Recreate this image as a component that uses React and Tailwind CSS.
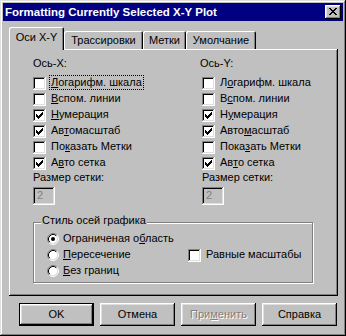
import React from "react";

// classic 3d bevels
const windowFrame = "shadow-[inset_-1px_-1px_#000,inset_1px_1px_#dfdfdf,inset_-2px_-2px_#808080,inset_2px_2px_#fff]";
const raised = "shadow-[inset_-1px_-1px_#000,inset_1px_1px_#fff,inset_-2px_-2px_#808080,inset_2px_2px_#dfdfdf]";
const sunken = "shadow-[inset_-1px_-1px_#fff,inset_1px_1px_#808080,inset_-2px_-2px_#dfdfdf,inset_2px_2px_#000]";

const leftItems = [
  { pre: "", u: "Л", post: "огарифм. шкала", checked: false, focus: true },
  { pre: "", u: "В", post: "спом. линии", checked: false },
  { pre: "", u: "Н", post: "умерация", checked: true },
  { pre: "Ав", u: "т", post: "омасштаб", checked: true },
  { pre: "По", u: "к", post: "азать Метки", checked: false },
  { pre: "А", u: "в", post: "то сетка", checked: true },
];

const rightItems = [
  { pre: "Л", u: "о", post: "гарифм. шкала", checked: false },
  { pre: "В", u: "с", post: "пом. линии", checked: false },
  { pre: "Н", u: "у", post: "мерация", checked: true },
  { pre: "Авто", u: "м", post: "асштаб", checked: true },
  { pre: "Пока", u: "з", post: "ать Метки", checked: false },
  { pre: "Ав", u: "т", post: "о сетка", checked: true },
];

const Label = ({ pre, u, post }) => (
  <>
    {pre}
    {u && <span className="underline underline-offset-[1px]">{u}</span>}
    {post}
  </>
);

const CheckMark = () => (
  <svg width="7" height="7" viewBox="0 0 7 7" shapeRendering="crispEdges">
    <rect x="6" y="0" width="1" height="1" />
    <rect x="5" y="1" width="2" height="1" />
    <rect x="0" y="2" width="1" height="1" />
    <rect x="4" y="2" width="3" height="1" />
    <rect x="0" y="3" width="2" height="1" />
    <rect x="3" y="3" width="3" height="1" />
    <rect x="0" y="4" width="5" height="1" />
    <rect x="1" y="5" width="3" height="1" />
    <rect x="2" y="6" width="1" height="1" />
  </svg>
);

const Box = ({ checked }) => (
  <span className={`flex w-[13px] h-[13px] shrink-0 items-center justify-center bg-white ${sunken}`}>
    {checked && <CheckMark />}
  </span>
);

const Radio = ({ on }) => (
  <svg width="12" height="12" viewBox="0 0 12 12" className="shrink-0">
    <circle cx="6" cy="6" r="4.5" fill="#fff" />
    <path d="M2.11 9.89 A5.5 5.5 0 0 1 9.89 2.11" fill="none" stroke="#808080" />
    <path d="M9.89 2.11 A5.5 5.5 0 0 1 2.11 9.89" fill="none" stroke="#fff" />
    <path d="M2.82 9.18 A4.5 4.5 0 0 1 9.18 2.82" fill="none" stroke="#000" />
    <path d="M9.18 2.82 A4.5 4.5 0 0 1 2.82 9.18" fill="none" stroke="#dfdfdf" />
    {on && <circle cx="6" cy="6" r="2" fill="#000" />}
  </svg>
);

const CheckRow = ({ item }) => (
  <div className="flex h-[16px] items-start">
    <Box checked={item.checked} />
    <span
      className={`ml-[4px] -mt-[1px] px-[1px] leading-[13px] whitespace-nowrap ${
        item.focus ? "outline outline-1 outline-dotted outline-black" : ""
      }`}
    >
      <Label {...item} />
    </span>
  </div>
);

const AxisColumn = ({ title, items, className }) => (
  <div className={className}>
    <div className="leading-[13px]">{title}</div>
    <div className="mt-[7px]">
      {items.map((it, i) => (
        <CheckRow key={i} item={it} />
      ))}
    </div>
    <div className="-mt-[2px] leading-[13px]">Размер сетки:</div>
    <div className={`mt-[3px] w-[22px] h-[18px] bg-[#c0c0c0] pl-[4px] pt-[2px] leading-[13px] text-[#808080] ${sunken}`}>
      2
    </div>
  </div>
);

const Button = ({ children, primary, disabled }) => (
  <div
    className={`flex w-[75px] h-[23px] items-center justify-center ${
      primary ? "border border-black" : ""
    }`}
  >
    <div className={`flex w-full h-full items-center justify-center ${raised}`}>
      <span className={disabled ? "text-[#808080] [text-shadow:1px_1px_0_#fff]" : ""}>{children}</span>
    </div>
  </div>
);

const CloseGlyph = () => (
  <svg width="8" height="7" viewBox="0 0 8 7" shapeRendering="crispEdges">
    <rect x="0" y="0" width="2" height="1" />
    <rect x="6" y="0" width="2" height="1" />
    <rect x="1" y="1" width="2" height="1" />
    <rect x="5" y="1" width="2" height="1" />
    <rect x="2" y="2" width="4" height="1" />
    <rect x="3" y="3" width="2" height="1" />
    <rect x="2" y="4" width="4" height="1" />
    <rect x="1" y="5" width="2" height="1" />
    <rect x="5" y="5" width="2" height="1" />
    <rect x="0" y="6" width="2" height="1" />
    <rect x="6" y="6" width="2" height="1" />
  </svg>
);

export default function App() {
  return (
    <div
      className={`w-[346px] h-[336px] overflow-hidden bg-[#c0c0c0] p-[3px] text-[11px] text-black font-['Liberation_Sans',Arial,sans-serif] ${windowFrame}`}
    >
      {/* title bar */}
      <div className="flex h-[18px] items-center justify-between bg-[#000080] pl-[2px] pr-[2px]">
        <span className="font-bold text-[11.5px] text-white leading-[13px] whitespace-nowrap">
          Formatting Currently Selected X-Y Plot
        </span>
        <div className={`flex w-[16px] h-[14px] items-center justify-center bg-[#c0c0c0] pb-[1px] ${raised}`}>
          <CloseGlyph />
        </div>
      </div>

      {/* tabs */}
      <div className="relative z-10 mt-[6px] ml-[6px] flex h-[22px] items-end">
        <div className="-mb-[1px] flex w-[55px] h-[23px] items-center justify-center rounded-t-[2px] bg-[#c0c0c0] pb-[3px] shadow-[inset_1px_1px_#fff,inset_-1px_0_#000,inset_-2px_0_#808080]">
          Оси X-Y
        </div>
        <div className="flex w-[79px] h-[18px] items-center justify-center rounded-t-[2px] shadow-[inset_1px_1px_#fff,inset_-1px_0_#000,inset_-2px_0_#808080]">
          Трассировки
        </div>
        <div className="flex w-[43px] h-[18px] items-center justify-center rounded-t-[2px] shadow-[inset_1px_1px_#fff,inset_-1px_0_#000,inset_-2px_0_#808080]">
          Метки
        </div>
        <div className="flex w-[70px] h-[18px] items-center justify-center rounded-t-[2px] shadow-[inset_1px_1px_#fff,inset_-1px_0_#000,inset_-2px_0_#808080]">
          Умолчание
        </div>
      </div>

      {/* tab panel */}
      <div className="ml-[6px] w-[329px] h-[247px] pl-[24px] pt-[8px] shadow-[inset_-1px_-1px_#000,inset_1px_1px_#fff,inset_-2px_-2px_#808080]">
        <div className="flex">
          <AxisColumn title="Ось-X:" items={leftItems} className="w-[169px]" />
          <AxisColumn title={<span className="-ml-[2px]">Ось-Y:</span>} items={rightItems} />
        </div>

        {/* axis style group */}
        <div className="relative mt-[17px] w-[280px] h-[61px] border border-[#808080] pl-[13px] pt-[10px] shadow-[inset_1px_1px_#fff,1px_1px_#fff]">
          <span className="absolute -top-[9px] left-[7px] bg-[#c0c0c0] px-[1px] leading-[13px] whitespace-nowrap">
            Стиль осей графика
          </span>
          <div className="flex">
            <div className="w-[141px]">
              <div className="flex h-[16px] items-start">
                <Radio on />
                <span className="ml-[4px] -mt-[1px] leading-[13px] whitespace-nowrap">
                  <Label pre="Ограниченая о" u="б" post="ласть" />
                </span>
              </div>
              <div className="flex h-[16px] items-start">
                <Radio />
                <span className="ml-[4px] -mt-[1px] leading-[13px] whitespace-nowrap">
                  <Label pre="" u="П" post="ересечение" />
                </span>
              </div>
              <div className="flex h-[16px] items-start">
                <Radio />
                <span className="ml-[4px] -mt-[1px] leading-[13px] whitespace-nowrap">
                  <Label pre="" u="Б" post="ез границ" />
                </span>
              </div>
            </div>
            <div className="pt-[16px]">
              <div className="flex h-[16px] items-start">
                <Box checked={false} />
                <span className="ml-[5px] -mt-[1px] leading-[13px] whitespace-nowrap">Равные масштабы</span>
              </div>
            </div>
          </div>
        </div>
      </div>

      {/* dialog buttons */}
      <div className="mt-[7px] ml-[16px] flex gap-[6px]">
        <Button primary>OK</Button>
        <Button>Отмена</Button>
        <Button disabled>
          <Label pre="При" u="м" post="енить" />
        </Button>
        <Button>Справка</Button>
      </div>
    </div>
  );
}
